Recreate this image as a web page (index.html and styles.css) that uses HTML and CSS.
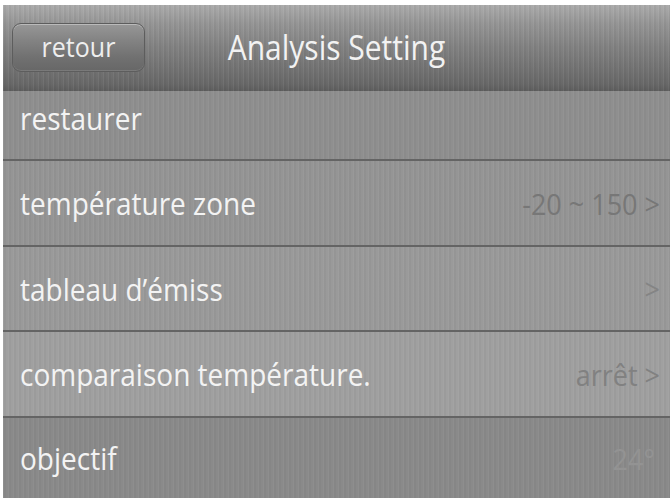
FILE: index.html
```html
<!DOCTYPE html>
<html lang="fr">
<head>
<meta charset="utf-8">
<title>Analysis Setting</title>
<link rel="stylesheet" href="styles.css">
</head>
<body>
<div class="screen">
  <header class="topbar">
    <button class="back"><span class="back-text">retour</span></button>
    <h1 class="title"><span class="title-text">Analysis Setting</span></h1>
  </header>
  <ul class="list">
    <li class="row row-1"><span class="label">restaurer</span></li>
    <li class="row row-2"><span class="label">température zone</span><span class="value">-20 ~ 150 &gt;</span></li>
    <li class="row row-3"><span class="label">tableau d’émiss</span><span class="value">&gt;</span></li>
    <li class="row row-4"><span class="label">comparaison température.</span><span class="value">arrêt &gt;</span></li>
    <li class="row row-5"><span class="label">objectif</span><span class="value faint">24°</span></li>
  </ul>
</div>
</body>
</html>
```
FILE: styles.css
```css
html, body {
  margin: 0;
  height: 100%;
  background: #ffffff;
}
body {
  padding: 5px 0 0 3px;
  box-sizing: border-box;
  font-family: "Open Sans", "Liberation Sans", sans-serif;
}
.screen {
  height: 100%;
  display: flex;
  flex-direction: column;
  background: #8a8a8a;
}
.topbar {
  position: relative;
  height: 86px;
  flex: none;
  display: flex;
  align-items: center;
  padding-left: 9px;
  box-sizing: border-box;
  background:
    repeating-linear-gradient(90deg, rgba(255,255,255,0.05) 0 1px, rgba(0,0,0,0.04) 1px 3px, rgba(255,255,255,0) 3px 5px),
    linear-gradient(180deg, #ababab 0%, #959595 22%, #828282 48%, #747474 72%, #686868 92%, #5e5e5e 100%);
}
.back {
  width: 133px;
  height: 49px;
  margin-top: -1px;
  border-radius: 9px;
  border: 1px solid #5d5d5d;
  background: linear-gradient(180deg, #979797 0%, #838383 35%, #717171 70%, #676767 100%);
  box-shadow: inset 0 1px 0 rgba(255,255,255,0.35), inset 0 -1px 0 rgba(255,255,255,0.12);
  color: #eeeeee;
  font-family: inherit;
  font-size: 25px;
  padding: 0 0 3px 0;
  cursor: pointer;
}
.back-text {
  display: inline-block;
  transform: scaleY(1.1);
}
.title {
  position: absolute;
  left: 0;
  right: 0;
  top: 0;
  bottom: 0;
  margin: 0;
  display: flex;
  align-items: center;
  justify-content: center;
  padding-bottom: 4px;
  font-size: 30px;
  font-weight: normal;
  color: #f2f2f2;
  pointer-events: none;
}
.title-text {
  display: inline-block;
  transform: scaleY(1.15);
}
.list {
  list-style: none;
  margin: 0;
  padding: 0;
  flex: 1;
  display: flex;
  flex-direction: column;
}
.row {
  box-sizing: border-box;
  display: flex;
  align-items: center;
  justify-content: space-between;
  padding: 0 10px 0 17px;
  border-bottom: 2px solid #646464;
  background:
    repeating-linear-gradient(90deg, rgba(255,255,255,0.035) 0 1px, rgba(0,0,0,0.03) 1px 3px, rgba(255,255,255,0) 3px 5px);
}
.row-1 { height: 70px; padding-bottom: 14px; background-color: #8f8f8f; }
.row-2 { height: 86px; background-color: #959595; }
.row-3 { height: 85px; background-color: #9a9a9a; }
.row-4 { height: 86px; background-color: #a0a0a0; }
.row-5 { flex: 1; background-color: #8a8a8a; border-bottom: none; }
.label {
  display: inline-block;
  font-size: 28px;
  color: #f3f3f3;
  transform: scaleY(1.13);
}
.value {
  display: inline-block;
  font-size: 27px;
  color: #777777;
  transform: scaleY(1.08);
}
.row-3 .value { color: #848484; }
.row-4 .value { color: #818181; }
.value.faint {
  color: #939393;
  margin-right: 5px;
}
```
